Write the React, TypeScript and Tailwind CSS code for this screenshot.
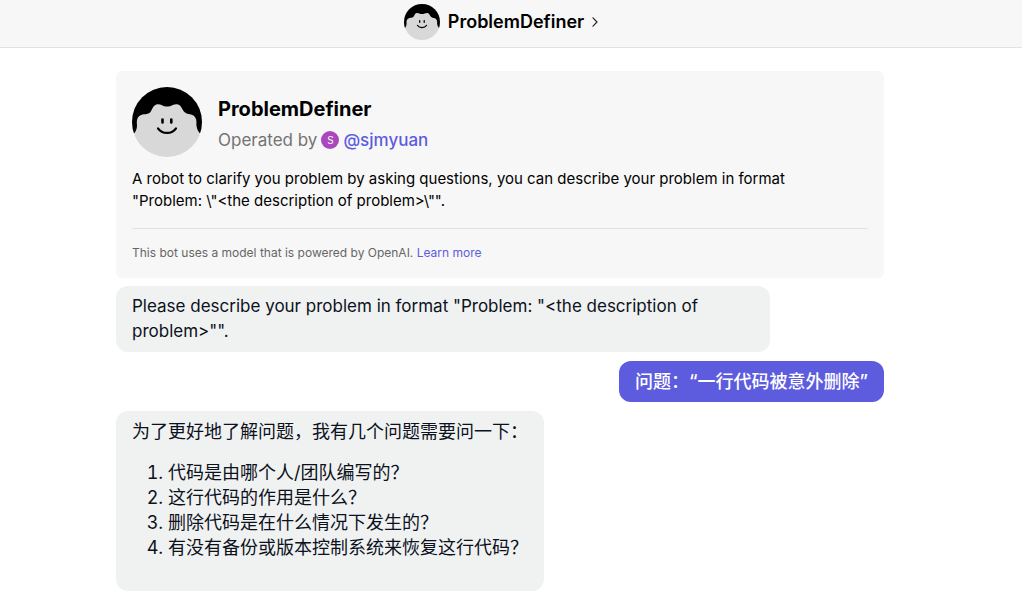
import type { ReactNode } from "react";

function Avatar({ className, id }: { className: string; id: string }) {
  return (
    <svg viewBox="0 0 70 70" className={className} role="img" aria-label="ProblemDefiner avatar">
      <defs>
        <clipPath id={id}>
          <circle cx="35" cy="35" r="35" />
        </clipPath>
      </defs>
      <g clipPath={`url(#${id})`}>
        <rect width="70" height="70" fill="#d8d8d8" />
        <path
          d="M-2 46 H2.500 C4.500 43 5 41 5 38 C4.500 34 5 30 8 28.500 C11 26.500 16 28 18.500 25 C20.500 22 21 18.500 24.500 17.500 C28.500 16.500 31 20 35 19.500 C39 20 42 16.500 46 17.500 C50 18.500 50 23.500 53 25.500 C56 28 60 26.500 62.500 29.500 C65.500 33 64 36 64.500 39 C65 42 66 44 67.500 46 H72 V-2 H-2Z"
          fill="#000"
        />
        <path d="M30.500 32.500v3M39.300 32.500v3" stroke="#000" strokeWidth="2.600" strokeLinecap="round" />
        <path d="M26 41.300C30 47.500 40 47.500 44 41.300" fill="none" stroke="#000" strokeWidth="2.200" strokeLinecap="round" />
      </g>
    </svg>
  );
}

function BotMessage({ children }: { children: ReactNode }) {
  return (
    <div className="max-w-[654px] self-start rounded-xl bg-[#f0f2f2] px-4 py-2 text-[#0c111c]">
      {children}
    </div>
  );
}

const questions = [
  "代码是由哪个人/团队编写的？",
  "这行代码的作用是什么？",
  "删除代码是在什么情况下发生的？",
  "有没有备份或版本控制系统来恢复这行代码？",
];

export default function App() {
  return (
    <div className="min-h-screen bg-white font-['Inter','Noto_Sans_CJK_SC',sans-serif] text-black">
      <header className="flex h-12 justify-center border-b border-[#e2e2e2] bg-[#f7f7f7] pr-5 pb-1">
        <button type="button" className="flex items-center gap-2 text-lg font-semibold">
          <Avatar id="header-avatar" className="size-9" />
          <span>ProblemDefiner</span>
          <svg viewBox="0 0 6 10" className="h-2.5 w-1.5" fill="none" stroke="#282829" strokeWidth="1.200" aria-hidden="true">
            <path d="M1 .8 5 5 1 9.200" strokeLinecap="round" strokeLinejoin="round" />
          </svg>
        </button>
      </header>

      <main className="pt-[23px] pr-[22px]">
        <div className="mx-auto flex max-w-3xl flex-col">
          <section className="mb-2 rounded-md bg-[#f7f7f7] p-4">
            <div className="flex items-center gap-4">
              <Avatar id="card-avatar" className="size-[70px] shrink-0" />
              <div className="pt-[5px]">
                <h1 className="text-xl leading-7 font-bold">ProblemDefiner</h1>
                <div className="mt-[3px] flex items-center gap-1 text-[17px] leading-7 text-[#737373]">
                  <span>Operated by</span>
                  <span className="flex size-[18px] items-center justify-center rounded-full bg-[#ab47bc] text-[10px] leading-none text-white">
                    S
                  </span>
                  <a href="#sjmyuan" className="font-medium text-[#5d5cde]">
                    @sjmyuan
                  </a>
                </div>
              </div>
            </div>
            <p className="mt-[11px] text-[15px] leading-[22px]">
              A robot to clarify you problem by asking questions, you can describe your problem in format
              <br />
              "Problem: \"&lt;the description of problem&gt;\"".
            </p>
            <p className="mt-4 border-t border-[#e2e2e2] pt-[15px] text-xs leading-[18px] text-[#666666]">
              This bot uses a model that is powered by OpenAI.{" "}
              <a href="#learn-more" className="text-[#5d5cde]">
                Learn more
              </a>
            </p>
          </section>

          <div className="flex flex-col gap-[9px] text-lg leading-[25px]">
            <BotMessage>
              <p className="text-[17px] leading-[25px]">
                Please describe your problem in format "Problem: "&lt;the description of problem&gt;"".
              </p>
            </BotMessage>
            <div className="self-end rounded-xl bg-[#5d5cde] px-4 py-2 font-medium text-white">
              <p>问题：“一行代码被意外删除”</p>
            </div>
            <BotMessage>
              <p>为了更好地了解问题，我有几个问题需要问一下：</p>
              <ol className="mt-4 mb-[23px] list-decimal pl-9">
                {questions.map((question) => (
                  <li key={question}>{question}</li>
                ))}
              </ol>
            </BotMessage>
          </div>
        </div>
      </main>
    </div>
  );
}
